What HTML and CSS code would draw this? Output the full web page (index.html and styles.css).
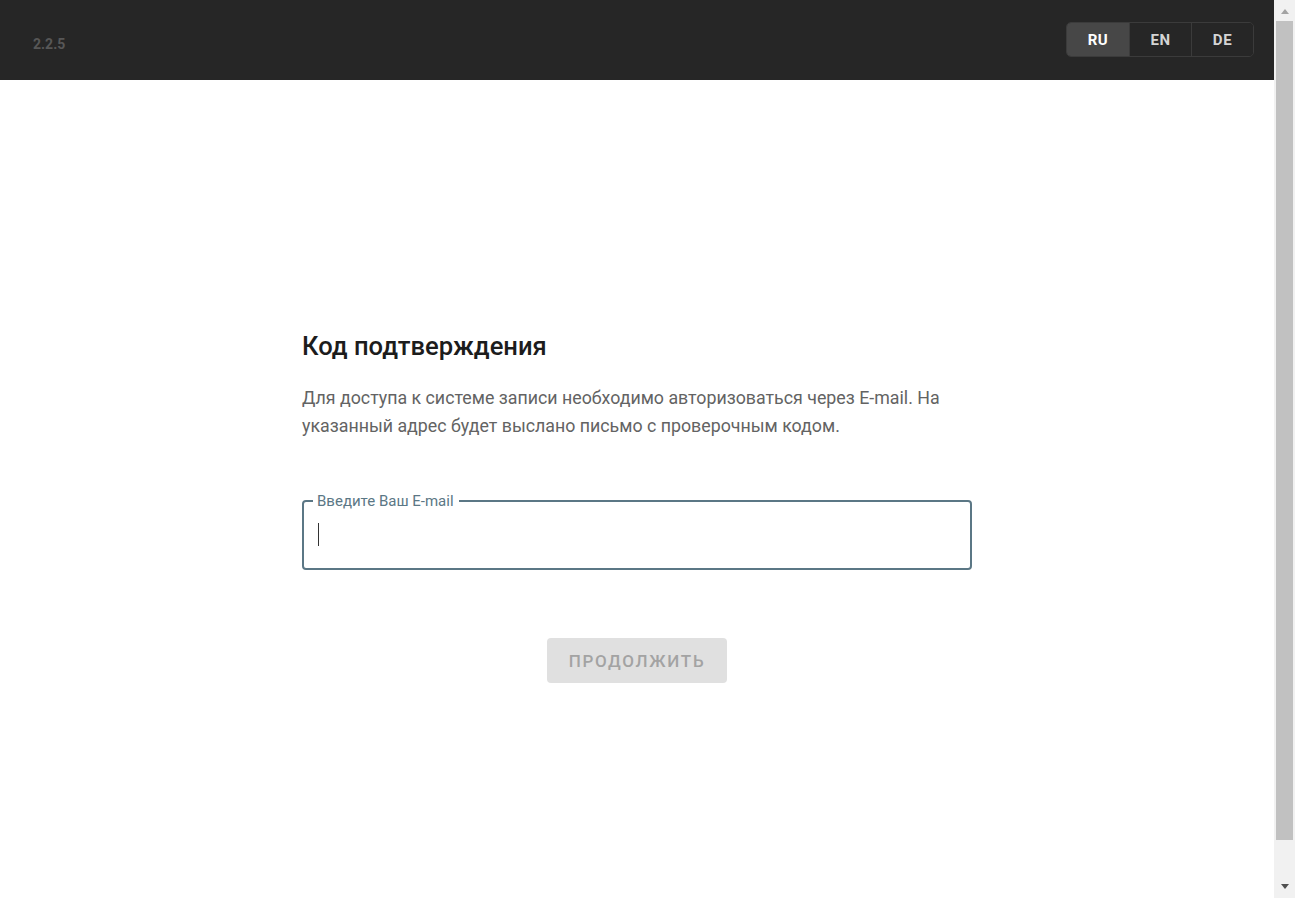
FILE: index.html
```html
<!DOCTYPE html>
<html lang="ru">
<head>
<meta charset="utf-8">
<title>Код подтверждения</title>
<link rel="stylesheet" href="styles.css">
</head>
<body>
<div class="page">
  <header class="topbar">
    <div class="version">2.2.5</div>
    <div class="langs">
      <button class="lang active">RU</button>
      <button class="lang">EN</button>
      <button class="lang">DE</button>
    </div>
  </header>
  <main class="main">
    <section class="card">
      <h1 class="title">Код подтверждения</h1>
      <p class="desc">Для доступа к системе записи необходимо авторизоваться через E-mail. На указанный адрес будет выслано письмо с проверочным кодом.</p>
      <div class="field">
        <span class="field-label">Введите Ваш E-mail</span>
        <span class="caret"></span>
      </div>
      <div class="actions">
        <button class="submit" disabled>ПРОДОЛЖИТЬ</button>
      </div>
    </section>
  </main>
</div>
<div class="scrollbar">
  <div class="sb-btn"><span class="arrow-up"></span></div>
  <div class="sb-track"><div class="sb-thumb"></div></div>
  <div class="sb-btn sb-btn-down"><span class="arrow-down"></span></div>
</div>
</body>
</html>
```
FILE: styles.css
```css
html, body { height: 100%; }
body {
  margin: 0;
  font-family: Roboto, "Liberation Sans", Arial, sans-serif;
  background: #fff;
  display: flex;
  overflow: hidden;
}
.page { flex: 1; min-width: 0; }

.scrollbar {
  width: 21px;
  flex: none;
  background: #f1f1f1;
  display: flex;
  flex-direction: column;
}
.sb-btn {
  height: 21px;
  display: flex;
  justify-content: center;
  padding-top: 9px;
  box-sizing: border-box;
}
.sb-btn-down { height: 58px; padding-top: 44px; }
.arrow-up, .arrow-down {
  width: 0;
  height: 0;
  border-left: 4.5px solid transparent;
  border-right: 4.5px solid transparent;
}
.arrow-up { border-bottom: 5px solid #a3a3a3; }
.arrow-down { border-top: 5px solid #505050; }
.sb-track { flex: 1; padding: 0 2px; }
.sb-thumb { height: 100%; background: #c1c1c1; }

.topbar {
  height: 80px;
  background: #262626;
  display: flex;
  align-items: center;
  justify-content: space-between;
  padding: 0 20px 0 33px;
  box-sizing: border-box;
}
.version {
  color: #575757;
  font-size: 14px;
  font-weight: 700;
  margin-top: 8px;
}
.langs {
  display: flex;
  border: 1px solid #3b3b3b;
  border-radius: 5px;
  overflow: hidden;
  margin-top: -1px;
}
.lang {
  width: 62px;
  height: 33px;
  border: 0;
  border-left: 1px solid #3b3b3b;
  background: #262626;
  color: #d4d4d4;
  font-family: Roboto, "Liberation Sans", Arial, sans-serif;
  font-size: 15px;
  font-weight: 700;
  letter-spacing: 0.6px;
  padding: 0;
}
.lang:first-child { border-left: 0; }
.lang.active { background: #474747; color: #fff; }

.main {
  display: flex;
  justify-content: center;
  padding-top: 249px;
}
.card { width: 670px; }
.title {
  margin: 0;
  font-size: 25.6px;
  font-weight: 500;
  color: #1c1c1c;
  line-height: 34px;
}
.desc {
  margin: 21px 0 0;
  font-size: 17.8px;
  line-height: 28px;
  color: #636363;
}
.field {
  margin-top: 60px;
  height: 70px;
  box-sizing: border-box;
  border: 2px solid #5b7785;
  border-radius: 4px;
  padding: 0 14px;
  position: relative;
  display: flex;
  align-items: center;
}
.field-label {
  position: absolute;
  left: 9px;
  top: -10px;
  font-size: 15px;
  line-height: 18px;
  color: #5b7785;
  background: #fff;
  padding: 0 5px 0 4px;
}
.caret {
  display: block;
  width: 1px;
  height: 23px;
  background: #333;
  margin-top: -2px;
}
.actions {
  display: flex;
  justify-content: center;
  margin-top: 68px;
}
.submit {
  width: 180px;
  height: 45px;
  border: 0;
  border-radius: 4px;
  background: #e0e0e0;
  color: #a3a3a3;
  font-family: Roboto, "Liberation Sans", Arial, sans-serif;
  font-size: 17px;
  font-weight: 500;
  letter-spacing: 1.7px;
  padding: 0;
}
```
